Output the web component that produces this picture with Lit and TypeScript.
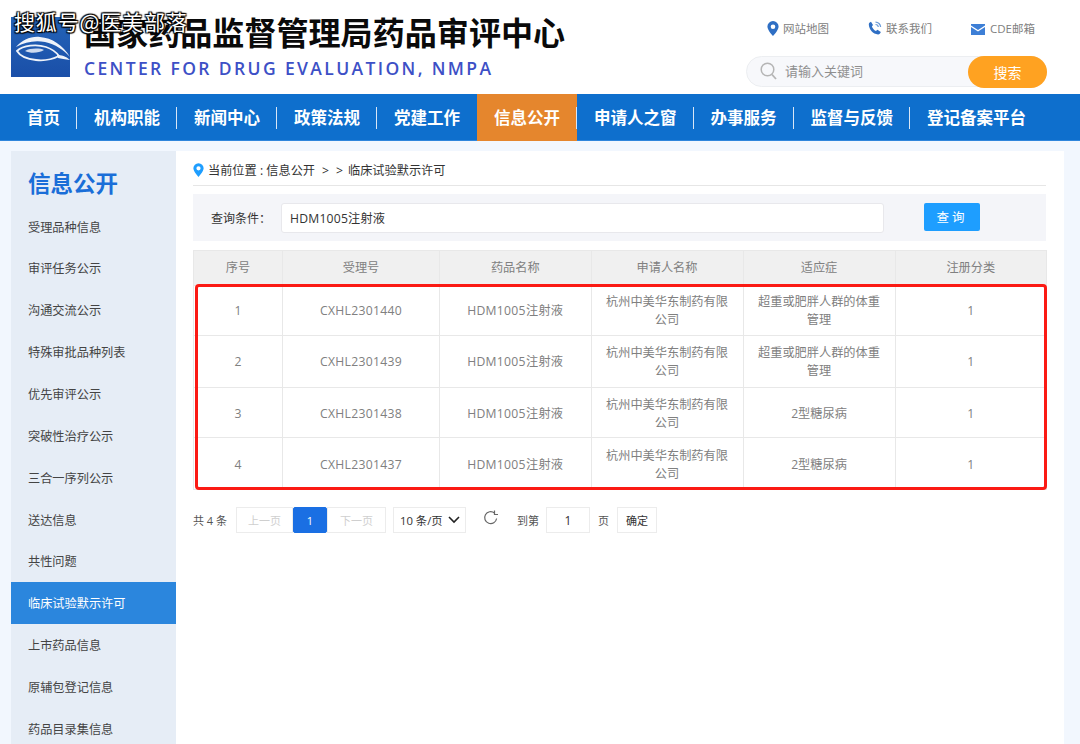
import { LitElement, html, css, svg } from "lit";
import { customElement } from "lit/decorators.js";

const NAV = ["首页","机构职能","新闻中心","政策法规","党建工作","信息公开","申请人之窗","办事服务","监督与反馈","登记备案平台"];
const SIDE = ["受理品种信息","审评任务公示","沟通交流公示","特殊审批品种列表","优先审评公示","突破性治疗公示","三合一序列公示","送达信息","共性问题","临床试验默示许可","上市药品信息","原辅包登记信息","药品目录集信息"];
const ROWS = [
  ["1","CXHL2301440","HDM1005注射液","杭州中美华东制药有限公司","超重或肥胖人群的体重管理","1"],
  ["2","CXHL2301439","HDM1005注射液","杭州中美华东制药有限公司","超重或肥胖人群的体重管理","1"],
  ["3","CXHL2301438","HDM1005注射液","杭州中美华东制药有限公司","2型糖尿病","1"],
  ["4","CXHL2301437","HDM1005注射液","杭州中美华东制药有限公司","2型糖尿病","1"],
];
const HEAD = ["序号","受理号","药品名称","申请人名称","适应症","注册分类"];
const COLS = [89, 157, 151.5, 152, 152, 151.5];
const ROW_H = [50, 52, 50, 52];

const pin = (c: string, w: number, h: number) => html`<svg width=${w} height=${h} viewBox="0 0 12 15"><path fill=${c} fill-rule="evenodd" d="M6 0a5.600 5.600 0 0 0-5.600 5.600C.4 9.400 6 15 6 15s5.600-5.600 5.600-9.400A5.600 5.600 0 0 0 6 0zm0 3.400a2.300 2.300 0 1 1 0 4.600 2.300 2.300 0 0 1 0-4.600z"/></svg>`;

@customElement("app-root")
export class AppRoot extends LitElement {
  static styles = css`
    :host { display: block; width: 1080px; height: 744px; overflow: hidden; position: relative; background: #f2f7fe;
      font-family: "Open Sans", "Noto Sans CJK SC", sans-serif; }
    * { box-sizing: border-box; }
    .wm { position: absolute; left: 14px; top: 7px; font-family: "Noto Sans CJK SC", sans-serif; font-size: 21px; line-height: 28px; color: #fff; letter-spacing: 0.85px;
      text-shadow: 0 0 2px #000, 1px 1px 1px #000, -1px -1px 1px #000, 1px -1px 1px #000, -1px 1px 1px #000; white-space: nowrap; }
    header { height: 94px; background: #fff; display: flex; padding: 17px 33px 0 11px; }
    .logo { width: 59px; height: 60px; flex: none; display: block; }
    .brand { margin-left: 14px; width: 520px; flex: none; }
    .cn { font-family: "Noto Sans CJK SC", sans-serif; font-size: 32.1px; line-height: 32px; font-weight: 700; color: #0a0a0a; white-space: nowrap; margin-top: -2px; }
    .en { font-size: 17.5px; line-height: 22px; font-weight: 600; letter-spacing: 2.37px; color: #3d50c6; margin-top: 10px; white-space: nowrap; }
    .tools { flex: 1; display: flex; flex-direction: column; align-items: flex-end; min-width: 0; }
    .links { display: flex; height: 20px; margin-top: 1px; margin-right: 12px; }
    .link { display: flex; align-items: center; font-size: 11.5px; color: #808080; white-space: nowrap; }
    .link svg { display: block; margin-right: 4px; }
    .link + .link { margin-left: 39px; }
    .link svg.mail { margin: 2px 5px 0 0; }
    .search { margin-top: 18px; width: 301px; height: 31px; position: relative; display: flex; align-items: center; background: #f7f8fb; border: 1px solid #eceef1; border-radius: 16px; padding-left: 13px; }
    .search svg { display: block; flex: none; }
    .ph { margin: -2px 0 0 8px; font-size: 13px; color: #8f8f8f; }
    .go { position: absolute; right: -1px; top: -1px; width: 79px; height: 32px; border-radius: 16px; background: #ffa221; color: #fff; font-size: 14px; display: flex; align-items: center; justify-content: center; }
    nav { height: 47px; background: #0e6fcd; display: flex; align-items: center; padding-left: 10px; border-bottom: 1px solid #2f86dc; }
    .ni { position: relative; height: 47px; padding: 0 17px; display: flex; align-items: center; color: #fff; font-family: "Noto Sans CJK SC", sans-serif; font-size: 16.5px; font-weight: 700; white-space: nowrap; }
    .ni.sep::after { content: ""; position: absolute; right: 0; top: 13px; height: 22px; width: 1px; background: #d8e6f6; }
    .ni.on { background: #e5862d; }
    .body { display: flex; margin: 10px 16px 0 11px; height: 593px; }
    aside { width: 165px; flex: none; background: #e6edf6; height: 593px; overflow: hidden; }
    .st { font-family: "Noto Sans CJK SC", sans-serif; font-size: 22.5px; line-height: 32px; font-weight: 700; color: #1a6ed8; padding: 15px 0 0 17px; height: 54.7px; }
    .si { height: 41.85px; display: flex; align-items: center; padding-left: 17px; font-size: 12.2px; color: #444; white-space: nowrap; }
    .si.on { background: #2b86dd; color: #fff; }
    main { flex: 1; background: #fff; padding: 0 18px 0 17px; min-width: 0; }
    .crumb { height: 35px; border-bottom: 1px solid #e6e6e6; display: flex; align-items: center; font-size: 12.2px; color: #333; padding-top: 4px; white-space: nowrap; }
    .crumb svg { margin-right: 4px; display: block; }
    .c1, .c2 { margin-left: 7px; }
    .c3 { margin-left: 5px; }
    .query { margin-top: 8px; height: 47px; background: #f4f5f9; display: flex; align-items: center; padding-left: 18px; }
    .ql { width: 70px; font-size: 12px; color: #333; white-space: nowrap; }
    .qi { width: 603px; height: 30px; background: #fff; border: 1px solid #e8e8ec; border-radius: 3px; display: flex; align-items: center; padding-left: 8px; font-size: 12.2px; letter-spacing: 0.2px; color: #333; }
    .qb { margin-left: 40px; margin-top: -2px; width: 56px; height: 28px; background: #1e9eff; border-radius: 2px; color: #fff; font-size: 12.5px; letter-spacing: 3px; display: flex; align-items: center; justify-content: center; }
    .tw { position: relative; margin-top: 9px; }
    table { width: 853px; border-collapse: collapse; table-layout: fixed; font-size: 12.2px; color: #808080; border: 1px solid #e8e8e8; }
    th, td { border: 1px solid #e8e8e8; text-align: center; font-weight: 400; padding: 0 13px; line-height: 18px; }
    th { background: #f0f0f0; height: 35px; }
    td.lat { letter-spacing: 0.3px; }
    tr.low td { padding-top: 2px; }
    .red { position: absolute; left: 2px; top: 34px; width: 852px; height: 206px; border: 3px solid #fb1a14; border-radius: 4px; }
    .pager { display: flex; align-items: center; height: 26px; margin-top: 17px; font-size: 11px; color: #555; }
    .total { width: 43px; white-space: nowrap; }
    .pg { height: 26px; border: 1px solid #ececec; display: flex; align-items: center; justify-content: center; color: #cfcfcf; font-size: 11px; }
    .pg.prev { width: 57px; }
    .pg.a { width: 34px; background: #1a6fe3; border-color: #1a6fe3; color: #fff; border-radius: 2px; }
    .pg.next { width: 59px; }
    .sel { margin-left: 7px; width: 73px; height: 26px; border: 1px solid #ececec; display: flex; align-items: center; padding-left: 6px; justify-content: space-between; padding-right: 5px; color: #333; font-size: 11.3px; white-space: nowrap; }
    .sel svg, .rf { display: block; flex: none; }
    .rf { margin-left: 17px; margin-top: -4px; }
    .to { margin-left: 18px; width: 29px; white-space: nowrap; }
    .box { width: 44px; height: 26px; border: 1px solid #ececec; display: flex; align-items: center; justify-content: center; color: #333; font-size: 12px; }
    .ye { margin-left: 8px; width: 19px; }
    .ok { width: 40px; height: 26px; border: 1px solid #ececec; display: flex; align-items: center; justify-content: center; color: #333; font-size: 11px; }
  `;

  render() {
    return html`
      <header>
        <svg class="logo" viewBox="0 0 59 60">
          <defs><linearGradient id="lg" x1="0" y1="0" x2="0" y2="1"><stop offset="0" stop-color="#2464b8"/><stop offset="1" stop-color="#1a4fa8"/></linearGradient></defs>
          <rect width="59" height="60" fill="url(#lg)"/>
          ${svg`<path d="M5 30C11 23 20 19 29 20C41 21 52 28 59 40C53 33 44 27 34 25C24 23 14 25 5 30Z" fill="#eef3fa"/>
          <path d="M6 34C12 28 26 27 35 30C41 32 45 35 48 39C42 42 34 44 25 43C15 42 9 39 6 34Z" fill="none" stroke="#eef3fa" stroke-width="1.800"/>
          <path d="M14 34C19 31 29 31 33 33C28 36 20 37 14 34Z" fill="#cfdcf0"/>
          <path d="M46 38C50 38 55 39 59 43C54 42 50 42 47 41Z" fill="#eef3fa"/>`}
        </svg>
        <div class="brand">
          <div class="cn">国家药品监督管理局药品审评中心</div>
          <div class="en">CENTER FOR DRUG EVALUATION, NMPA</div>
        </div>
        <div class="tools">
          <div class="links">
            <div class="link">${pin("#2f6fc4", 12, 15)}网站地图</div>
            <div class="link">
              <svg width="14" height="14" viewBox="0 0 14 14"><path fill="#2f6fc4" d="M3 .8 5 4 3.900 5.400c.6 1.900 2 3.500 4 4.500L9.500 8.800l3.300 2.300c-.5 1.500-1.500 2.400-2.800 2.300C5 13 1 8.500.8 3.500.8 2.200 1.700 1.200 3 .8z"/><path fill="none" stroke="#6a9bd8" stroke-width="1.200" d="M7.500 1.200A5 5 0 0 1 12.600 6M7.500 3.500A2.800 2.800 0 0 1 10.300 6"/></svg>
              联系我们
            </div>
            <div class="link">
              <svg class="mail" width="14" height="11" viewBox="0 0 14 11"><path fill="#3d7fd6" d="M0 0h14v1.500L7 6 0 1.500zM0 3l7 4.500L14 3v8H0z"/></svg>
              CDE邮箱
            </div>
          </div>
          <div class="search">
            <svg width="17" height="19" viewBox="0 0 17 19"><circle cx="7.500" cy="7.500" r="6.300" fill="none" stroke="#b5b5b5" stroke-width="1.500"/><path d="M12 12.500 16 17" stroke="#b5b5b5" stroke-width="1.800" fill="none"/></svg>
            <span class="ph">请输入关键词</span>
            <div class="go">搜索</div>
          </div>
        </div>
      </header>
      <nav>
        ${NAV.map((n, i) => html`<div class="ni ${i === 5 ? "on" : ""} ${i !== 9 && i !== 4 ? "sep" : ""}">${n}</div>`)}
      </nav>
      <div class="body">
        <aside>
          <div class="st">信息公开</div>
          ${SIDE.map((s, i) => html`<div class="si ${i === 9 ? "on" : ""}">${s}</div>`)}
        </aside>
        <main>
          <div class="crumb">${pin("#1e9eff", 11, 14)}<span>当前位置 : 信息公开</span><span class="c1">&gt;</span><span class="c2">&gt;</span><span class="c3">临床试验默示许可</span></div>
          <div class="query">
            <div class="ql">查询条件：</div>
            <div class="qi">HDM1005注射液</div>
            <div class="qb">查询</div>
          </div>
          <div class="tw">
            <table>
              <colgroup>${COLS.map((w) => html`<col style="width:${w}px"/>`)}</colgroup>
              <thead><tr>${HEAD.map((h) => html`<th>${h}</th>`)}</tr></thead>
              <tbody>
                ${ROWS.map((r, i) => html`<tr class=${i > 1 ? "low" : ""} style="height:${ROW_H[i]}px">${r.map((c, j) => html`<td class=${j === 1 || j === 2 ? "lat" : ""}>${c}</td>`)}</tr>`)}
              </tbody>
            </table>
            <div class="red"></div>
          </div>
          <div class="pager">
            <div class="total">共 4 条</div>
            <div class="pg prev">上一页</div>
            <div class="pg a">1</div>
            <div class="pg next">下一页</div>
            <div class="sel">10 条/页
              <svg width="12" height="8" viewBox="0 0 12 8"><path d="M1 1l5 5 5-5" fill="none" stroke="#222" stroke-width="1.600"/></svg>
            </div>
            <svg class="rf" width="16" height="16" viewBox="0 0 16 16"><path d="M13.600 8.500A6 6 0 1 1 11.500 3" fill="none" stroke="#666" stroke-width="1.200"/><path d="M11.500 .5v4h3.500" fill="none" stroke="#666" stroke-width="1.200"/></svg>
            <div class="to">到第</div>
            <div class="box">1</div>
            <div class="ye">页</div>
            <div class="ok">确定</div>
          </div>
        </main>
      </div>
      <div class="wm">搜狐号@医美部落</div>
    `;
  }
}
